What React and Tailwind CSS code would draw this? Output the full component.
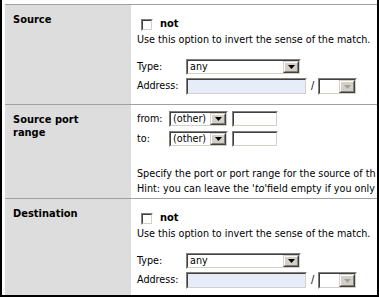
import React from 'react';

function DropButton({ disabled }) {
  return (
    <div className="w-[16px] h-full shrink-0 border border-t-[#d4d0c8] border-l-[#d4d0c8] border-r-[#404040] border-b-[#404040]">
      <div className="w-full h-full flex items-center justify-center bg-[#d4d0c8] border border-t-white border-l-white border-r-[#808080] border-b-[#808080]">
        <svg width="7" height="4" viewBox="0 0 7 4">
          <path d="M0 0h7L3.5 4z" fill={disabled ? '#a0a0a0' : '#000'} />
        </svg>
      </div>
    </div>
  );
}

function Sunken({ className, children }) {
  return (
    <div className={`border border-t-[#808080] border-l-[#808080] border-r-white border-b-white ${className}`}>
      <div className="w-full h-full flex border border-t-[#404040] border-l-[#404040] border-r-[#d4d0c8] border-b-[#d4d0c8]">
        {children}
      </div>
    </div>
  );
}

function Select({ value, className, disabled }) {
  return (
    <Sunken className={className}>
      <div className="flex-1 bg-white pl-[2px] leading-[12px] overflow-hidden whitespace-nowrap">{value}</div>
      <DropButton disabled={disabled} />
    </Sunken>
  );
}

function AddressRows() {
  return (
    <div className="flex flex-col gap-[3px]">
      <div className="flex items-center h-[16px]">
        <span className="w-[49px]">Type:</span>
        <Select value="any" className="w-[115px] h-[16px]" />
      </div>
      <div className="flex items-center h-[17px]">
        <span className="w-[49px]">Address:</span>
        <Sunken className="w-[121px] h-[17px]">
          <div className="flex-1 bg-[#e6ecf8]" />
        </Sunken>
        <span className="mx-[4px]">/</span>
        <Select value="" className="w-[39px] h-[17px]" disabled />
      </div>
    </div>
  );
}

function NotBlock() {
  return (
    <>
      <div className="flex items-center h-[13px] mt-[13px] pl-[4px]">
        <Sunken className="w-[12px] h-[12px]">
          <div className="flex-1 bg-white" />
        </Sunken>
        <span className="ml-[7px] font-bold text-[11px]">not</span>
      </div>
      <div className="leading-[14px] mt-[2px] whitespace-nowrap">Use this option to invert the sense of the match.</div>
    </>
  );
}

function Row({ label, children, height }) {
  return (
    <div className={`grid grid-cols-[126px_1fr] border-t border-[#a0a0a0] ${height}`}>
      <div className="bg-[#dddddd] pl-[8px] pt-[8px] font-bold text-[11px] leading-[13px]">{label}</div>
      <div className="pl-[6px] overflow-hidden">{children}</div>
    </div>
  );
}

export default function App() {
  return (
    <div
      className="w-[379px] h-[297px] bg-white overflow-hidden text-[10.7px] text-black"
      style={{ fontFamily: '"DejaVu Sans Condensed", "DejaVu Sans", sans-serif' }}
    >
      <div className="h-[297px] border-l-2 border-r-2 border-b-2 border-black pl-[3px] flex flex-col overflow-hidden">
        <div className="h-[4px] shrink-0" />
        <Row label="Source" height="h-[100px] shrink-0">
          <NotBlock />
          <div className="mt-[12px]">
            <AddressRows />
          </div>
        </Row>
        <Row label={<span>Source port<br />range</span>} height="h-[94px] shrink-0">
          <div className="flex flex-col gap-[4px] mt-[6px]">
            <div className="flex items-center h-[16px]">
              <span className="w-[32px]">from:</span>
              <Select value="(other)" className="w-[59px] h-[16px]" />
              <Sunken className="w-[46px] h-[16px] ml-[4px]">
                <div className="flex-1 bg-white" />
              </Sunken>
            </div>
            <div className="flex items-center h-[16px]">
              <span className="w-[32px]">to:</span>
              <Select value="(other)" className="w-[59px] h-[16px]" />
              <Sunken className="w-[46px] h-[16px] ml-[4px]">
                <div className="flex-1 bg-white" />
              </Sunken>
            </div>
          </div>
          <div className="mt-[19px] leading-[15px] whitespace-nowrap">
            <div>Specify the port or port range for the source of th</div>
            <div>Hint: you can leave the <i>'to'</i>field empty if you only</div>
          </div>
        </Row>
        <Row label="Destination" height="flex-1">
          <NotBlock />
          <div className="mt-[12px]">
            <AddressRows />
          </div>
        </Row>
      </div>
    </div>
  );
}
